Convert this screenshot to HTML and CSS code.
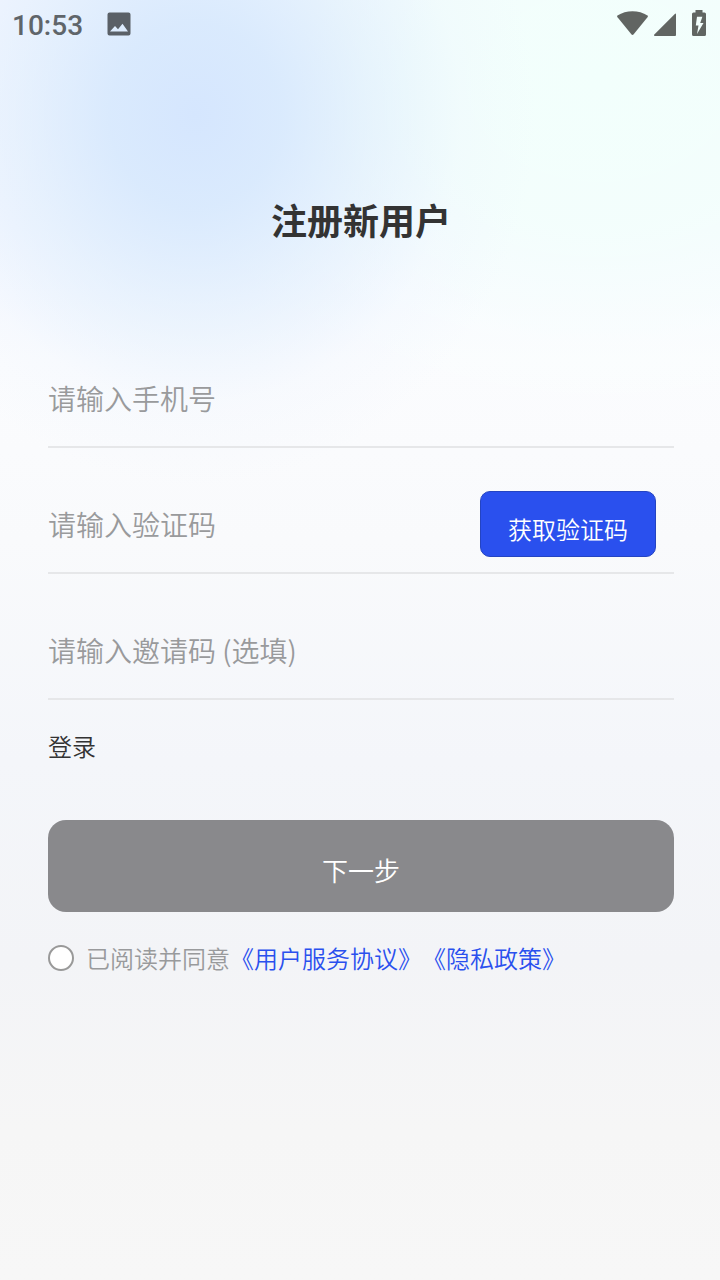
FILE: index.html
```html
<!DOCTYPE html>
<html lang="zh-CN">
<head>
  <meta charset="UTF-8" />
  <meta name="viewport" content="width=device-width, initial-scale=1.0"/>
  <title>注册新用户</title>
  <link rel="stylesheet" href="styles.css">
</head>
<body>

  <div class="status-bar">
    <span class="time">10:53</span>
    <svg class="icon-picture" width="24" height="24" viewBox="0 0 24 24">
      <path fill-rule="evenodd" d="M2.5 0.5h19a2 2 0 0 1 2 2v19a2 2 0 0 1-2 2h-19a2 2 0 0 1-2-2v-19a2 2 0 0 1 2-2zM3 19.500h18l-5.500-7.700-4.500 5.500-3-3.300z"/>
    </svg>
    <div class="status-right">
      <svg width="32" height="25" viewBox="0 0 32 25">
        <path d="M0.500 4.500C9-1.300 22-1.300 30.500 4.500Q31.300 5.200 30.500 6.300L16.700 23.300Q15.500 24.700 14.300 23.300L0.500 6.300Q-0.300 5.200 0.500 4.500z"/>
      </svg>
      <svg class="icon-signal" width="23" height="23" viewBox="0 0 23 23">
        <path d="M22 1.200V22a1 1 0 0 1-1 1H0.800Q-0.500 22.500 0.300 21.500L20.800 1Q22 0 22 1.200z"/>
      </svg>
      <svg class="icon-battery" width="14" height="26" viewBox="0 0 14 26">
        <path fill-rule="evenodd" d="M3.500 0h7v2.500h2A1.500 1.500 0 0 1 14 4v20.500a1.500 1.500 0 0 1-1.500 1.500h-11A1.500 1.500 0 0 1 0 24.500V4a1.500 1.500 0 0 1 1.500-1.500h2zM5 6.700L3.800 15.500h2.700L5 24l6.500-11H8.200l2.200-6.300z"/>
      </svg>
    </div>
  </div>

  <div class="container">
    <h1>注册新用户</h1>
    <form id="registerForm">
      <div class="form-group">
        <input type="tel" id="phone" placeholder="请输入手机号" />
      </div>

      <div class="form-group">
        <input type="text" id="code" placeholder="请输入验证码" />
        <button type="button" class="code-btn">获取验证码</button>
      </div>

      <div class="form-group">
        <input type="text" id="invite" placeholder="请输入邀请码 (选填)" />
      </div>

      <a class="login-link">登录</a>

      <button type="submit" class="next-btn">下一步</button>

      <label class="agreement">
        <input type="checkbox" id="agree" />
        <span>已阅读并同意<a>《用户服务协议》</a><a>《隐私政策》</a></span>
      </label>
    </form>
  </div>

</body>
</html>
```

FILE: styles.css
```css
* {
  box-sizing: border-box;
}

body {
  margin: 0;
  min-height: 1280px;
  background:
    radial-gradient(ellipse 340px 370px at 195px 115px, rgba(213, 230, 254, 1) 0%, rgba(214, 232, 253, 0.88) 25%, rgba(218, 235, 252, 0.52) 52%, rgba(232, 241, 255, 0.2) 78%, rgba(240, 245, 255, 0) 100%),
    radial-gradient(ellipse 460px 350px at 600px 80px, #f2fffc 0%, rgba(243, 255, 252, 0.9) 40%, rgba(249, 255, 254, 0.4) 75%, rgba(255, 255, 255, 0) 100%),
    linear-gradient(to bottom, #f4f7ff 0, #f5f8ff 230px, #fbfcfe 360px, #f9fafc 540px, #f4f6fa 760px, #f3f4f7 960px, #f6f6f6 1130px, #f7f7f7 1280px);
  font-family: "Noto Sans CJK SC", sans-serif;
  font-weight: 350;
  text-spacing-trim: space-all;
  color: #333;
}

.status-bar {
  display: flex;
  height: 48px;
  padding: 0 14px 0 12px;
  align-items: center;
  fill: #5a6067;
}

.time {
  font-family: Roboto, sans-serif;
  font-size: 28px;
  font-weight: 500;
  line-height: 48px;
  color: #5f656a;
  padding-top: 3px;
}

.icon-picture {
  margin-left: 24px;
}

.status-right {
  display: flex;
  align-items: flex-end;
  margin-left: auto;
  height: 26px;
  margin-bottom: 2px;
  fill: #616562;
}

.icon-signal {
  margin-left: 5px;
}

.icon-battery {
  margin-left: 15px;
}

.container {
  padding: 144px 46px 0 48px;
}

h1 {
  margin: 0 0 104px;
  text-align: center;
  font-size: 36px;
  line-height: 54px;
  font-weight: bold;
}

.form-group {
  display: flex;
  align-items: center;
  height: 98px;
  margin-bottom: 28px;
  padding-right: 18px;
  border-bottom: 2px solid #e6e7e9;
}

.form-group input {
  flex: 1;
  min-width: 0;
  padding: 0;
  border: none;
  outline: none;
  background: transparent;
  font-family: inherit;
  font-size: 28px;
  font-weight: inherit;
  color: #333;
}

.form-group input::placeholder {
  color: #999a9c;
  opacity: 1;
}

button {
  font-family: inherit;
  font-weight: inherit;
  color: white;
  border: none;
  cursor: pointer;
}

.code-btn {
  width: 176px;
  height: 66px;
  padding: 8px 0 0;
  background-color: #2a50ee;
  border: 1px solid #2444c2;
  border-radius: 10px;
  font-size: 24px;
}

.login-link {
  display: block;
  font-size: 24px;
  line-height: 36px;
}

.next-btn {
  display: block;
  width: 100%;
  height: 92px;
  margin-top: 56px;
  padding: 7px 0 0;
  background-color: #89898c;
  border-radius: 18px;
  font-size: 26px;
}

.agreement {
  display: flex;
  align-items: center;
  margin-top: 28px;
  font-size: 24px;
  line-height: 36px;
  color: #999a9c;
}

.agreement input {
  appearance: none;
  width: 26px;
  height: 26px;
  margin: 0 12px 0 0;
  border: 2px solid #999;
  border-radius: 50%;
  background: white;
}

.agreement a {
  color: #2a50ee;
}
```
